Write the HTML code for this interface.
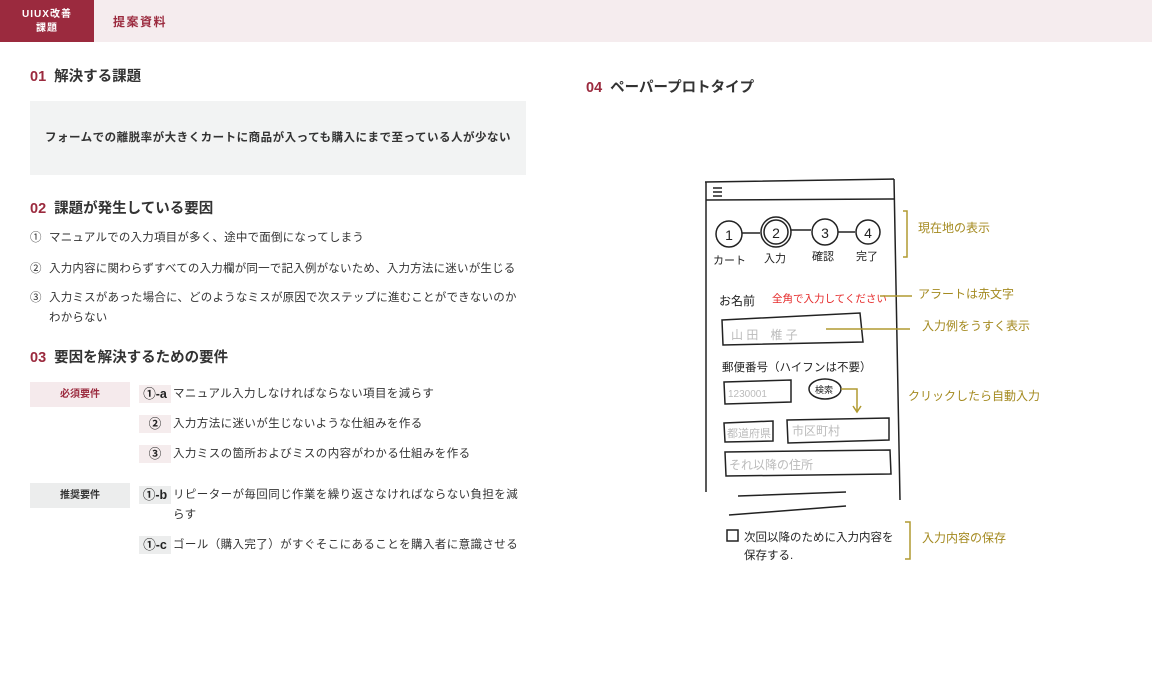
<!DOCTYPE html>
<html><head><meta charset="utf-8"><style>
*{margin:0;padding:0;box-sizing:border-box}
body{width:1152px;height:700px;background:#fff;font-family:"Liberation Sans","Noto Sans CJK JP",sans-serif;color:#333;position:relative;overflow:hidden}
.hdr{position:absolute;left:0;top:0;width:1152px;height:42px;background:#f5ecee}
.logo{position:absolute;left:0;top:0;width:94px;height:42px;background:#9b2a3e;color:#fff;font-size:10px;font-weight:bold;text-align:center;line-height:14px;padding-top:8px;letter-spacing:1px}
.ht{position:absolute;left:113px;top:13px;font-size:12px;color:#9b2a3e;letter-spacing:1.5px;font-weight:bold}
.h{position:absolute;font-size:14.5px;font-weight:bold;color:#333}
.h b{color:#9b2a3e;margin-right:8px}
.box{position:absolute;left:30px;top:101px;width:496px;height:74px;background:#f2f3f3;font-size:11.5px;font-weight:bold;text-align:center;line-height:74px;color:#333;letter-spacing:.5px}
.li{position:absolute;left:49px;font-size:11.5px;color:#333;line-height:20px;letter-spacing:.2px;width:480px}
.li span{position:absolute;left:-19px;top:0}
.tag{position:absolute;left:30px;width:100px;height:25px;font-size:10px;font-weight:bold;text-align:center;line-height:25px}
.n{position:absolute;left:139px;width:32px;height:18px;font-size:12.5px;font-weight:bold;text-align:center;line-height:18px;background:#f5eced;color:#222}
.n2{background:#eceded}
.t{position:absolute;left:173px;font-size:11.5px;line-height:20px;color:#333;width:360px;letter-spacing:.4px}
svg{position:absolute;left:0;top:0}
</style></head><body>
<div class="hdr"></div>
<div class="logo">UIUX改善<br>課題</div>
<div class="ht">提案資料</div>
<div class="h" style="left:30px;top:65px"><b>01</b>解決する課題</div>
<div class="box">フォームでの離脱率が大きくカートに商品が入っても購入にまで至っている人が少ない</div>
<div class="h" style="left:30px;top:197px"><b>02</b>課題が発生している要因</div>
<div class="li" style="top:228px"><span>①</span>マニュアルでの入力項目が多く、途中で面倒になってしまう</div>
<div class="li" style="top:259px"><span>②</span>入力内容に関わらずすべての入力欄が同一で記入例がないため、入力方法に迷いが生じる</div>
<div class="li" style="top:288px;width:476px"><span>③</span>入力ミスがあった場合に、どのようなミスが原因で次ステップに進むことができないのかわからない</div>
<div class="h" style="left:30px;top:346px"><b>03</b>要因を解決するための要件</div>
<div class="tag" style="top:382px;background:#f5eaec;color:#9b2a3e">必須要件</div>
<div class="n" style="top:385px">①-a</div><div class="t" style="top:384px">マニュアル入力しなければならない項目を減らす</div>
<div class="n" style="top:415px">②</div><div class="t" style="top:414px">入力方法に迷いが生じないような仕組みを作る</div>
<div class="n" style="top:445px">③</div><div class="t" style="top:444px">入力ミスの箇所およびミスの内容がわかる仕組みを作る</div>
<div class="tag" style="top:483px;background:#eceded;color:#333">推奨要件</div>
<div class="n n2" style="top:486px">①-b</div><div class="t" style="top:485px;width:350px">リピーターが毎回同じ作業を繰り返さなければならない負担を減らす</div>
<div class="n n2" style="top:536px">①-c</div><div class="t" style="top:535px;width:370px">ゴール（購入完了）がすぐそこにあることを購入者に意識させる</div>
<div class="h" style="left:586px;top:76px"><b>04</b>ペーパープロトタイプ</div>
<svg width="1152" height="700" font-family="Liberation Sans,Noto Sans CJK JP,sans-serif">
<g fill="none" stroke="#222" stroke-width="1.5">
<path d="M705 182 L894 179 M706 182 L706 492 M894 179 L900 500 M706 200 L895 199"/>
<path d="M713 188h9M713 192h9M713 196h9"/>
<circle cx="729" cy="234" r="13"/><circle cx="776" cy="232" r="15"/><circle cx="776" cy="232" r="12"/><circle cx="825" cy="232" r="13"/><circle cx="868" cy="232" r="12"/>
<path d="M742 233h18M791 230h20M838 232h17"/>
<path d="M722 320 L860 313 L863 342 L723 345Z"/>
<path d="M724 382 L791 380 L791 402 L725 404Z"/>
<ellipse cx="825" cy="389" rx="16" ry="10"/>
<path d="M724 423 L773 421 L773 441 L725 442Z"/>
<path d="M787 420 L889 418 L889 440 L788 443Z"/>
<path d="M725 452 L890 450 L891 474 L726 476Z"/>
<path d="M738 496 L846 492 M729 515 L846 506"/>
<rect x="727" y="530" width="11" height="11"/>
</g>
<g font-size="14" fill="#222" text-anchor="middle"><text x="729" y="240">1</text><text x="776" y="238">2</text><text x="825" y="238">3</text><text x="868" y="238">4</text></g>
<g font-size="11" fill="#222"><text x="713" y="264">カート</text><text x="764" y="262">入力</text><text x="812" y="260">確認</text><text x="856" y="260">完了</text>
<text x="719" y="305" font-size="12">お名前</text><text x="722" y="371" font-size="11.5">郵便番号（ハイフンは不要）</text><text x="815" y="393" font-size="9">検索</text>
<text x="744" y="541" font-size="11.5">次回以降のために入力内容を</text><text x="744" y="559" font-size="11.5">保存する.</text></g>
<text x="772" y="302" font-size="10.5" fill="#e52a2a">全角で入力してください</text>
<g fill="#bbb" font-size="12"><text x="731" y="339">山 田　椎 子</text><text x="728" y="397" font-size="10">1230001</text><text x="727" y="437" font-size="11">都道府県</text><text x="792" y="435">市区町村</text><text x="729" y="469">それ以降の住所</text></g>
<g stroke="#b09a30" stroke-width="1.5" fill="none"><path d="M903 211h4v46h-4M880 296h32M826 329h84M841 389h16v22M853 406l4 6 4-6M905 522h5v37h-5"/></g>
<g fill="#a48a20" font-size="12"><text x="918" y="232">現在地の表示</text><text x="918" y="298">アラートは赤文字</text><text x="922" y="330">入力例をうすく表示</text><text x="908" y="400">クリックしたら自動入力</text><text x="922" y="542">入力内容の保存</text></g>
</svg>
</body></html>
